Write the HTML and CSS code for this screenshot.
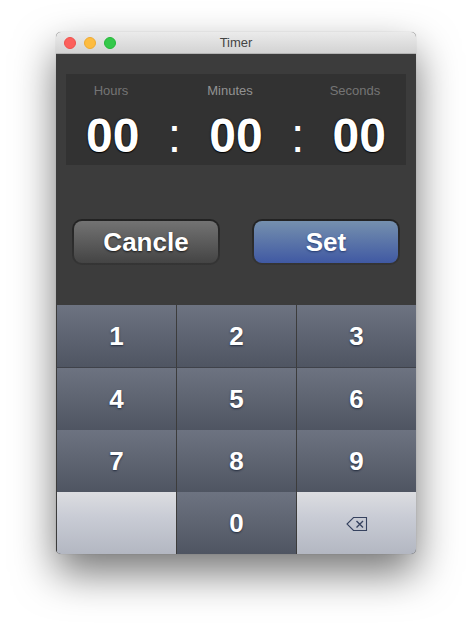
FILE: index.html
```html
<!DOCTYPE html>
<html lang="en">
<head>
<meta charset="utf-8">
<meta name="viewport" content="width=device-width, initial-scale=1">
<title>Timer</title>
<link rel="stylesheet" href="styles.css">
</head>
<body>
<main class="window">
  <header class="titlebar">
    <div class="lights">
      <button class="light close" type="button" aria-label="Close"></button>
      <button class="light minimize" type="button" aria-label="Minimize"></button>
      <button class="light expand" type="button" aria-label="Zoom"></button>
    </div>
    <h1 class="title">Timer</h1>
  </header>
  <section class="display">
    <div class="labels"><span>Hours</span><span class="bright">Minutes</span><span>Seconds</span></div>
    <div class="digits">
      <span>00</span><span class="colon">:</span><span>00</span><span class="colon">:</span><span>00</span>
    </div>
  </section>
  <div class="actions">
    <button class="action" type="button">Cancle</button>
    <button class="action set" type="button">Set</button>
  </div>
  <div class="keypad">
    <button class="key" type="button">1</button>
    <button class="key" type="button">2</button>
    <button class="key" type="button">3</button>
    <button class="key" type="button">4</button>
    <button class="key" type="button">5</button>
    <button class="key" type="button">6</button>
    <button class="key" type="button">7</button>
    <button class="key" type="button">8</button>
    <button class="key" type="button">9</button>
    <button class="key light-key" type="button" aria-label="Blank"></button>
    <button class="key" type="button">0</button>
    <button class="key light-key" type="button" aria-label="Delete">
      <svg class="delete" viewBox="0 0 22 16" width="22" height="16" fill="none" stroke="#36425f">
        <path d="M7.500 1.500H20.500V14.500H7.500L1 8Z" stroke-width="1.100"/>
        <path d="M10.500 5L17 11.500M17 5L10.500 11.500" stroke-width="1.400"/>
      </svg>
    </button>
  </div>
</main>
</body>
</html>
```
FILE: styles.css
```css
* { box-sizing: border-box; }

body {
  margin: 0;
  padding: 32px 56px 80px;
  background: #fff;
  font-family: "Liberation Sans", Arial, sans-serif;
}

button {
  margin: 0;
  padding: 0;
  border: 0;
  font-family: inherit;
}

.window {
  overflow: hidden;
  border-radius: 5px;
  background: #3c3c3c;
  box-shadow: 0 0 1px rgba(0, 0, 0, 0.3), 0 19px 42px rgba(0, 0, 0, 0.54);
}

.titlebar {
  display: grid;
  grid-template-columns: 1fr auto 1fr;
  align-items: center;
  height: 22px;
  padding: 0 8px;
  background: linear-gradient(#ebebeb, #d3d3d3);
  border-bottom: 1px solid #b4b4b4;
}

.lights {
  display: flex;
  gap: 8px;
}

.light {
  width: 12px;
  height: 12px;
  border-radius: 50%;
}

.close { background: #fc605c; border: 1px solid #ee514c; }
.minimize { background: #fdbc40; border: 1px solid #eeaa32; }
.expand { background: #34c84a; border: 1px solid #24b838; }

.title {
  margin: 0;
  color: #444;
  font-size: 13px;
  font-weight: 400;
  line-height: 20px;
}

.display {
  margin: 20px 10px 0;
  padding: 8px 0 0;
  background: #323232;
}

.labels {
  display: grid;
  grid-template-columns: 90px 1fr 102px;
  color: #757575;
  font-size: 13px;
  line-height: 17px;
  text-align: center;
}

.bright { color: #929292; }

.digits {
  display: grid;
  grid-template-columns: repeat(5, 1fr);
  padding: 8px 16px 0;
  color: #fff;
  font-size: 48px;
  font-weight: 700;
  line-height: 58px;
  text-align: center;
  text-shadow: 0 0 2px #000, 0 1px 1px #000;
}

.colon {
  font-weight: 400;
  text-shadow: none;
}

.actions {
  display: grid;
  grid-template-columns: 1fr 1fr;
  gap: 32px;
  padding: 54px 16px 40px;
}

.action {
  height: 46px;
  border: 2px solid transparent;
  border-radius: 10px;
  background:
    linear-gradient(#737373, #444) padding-box,
    linear-gradient(#222, #353535) border-box;
  color: #fff;
  font-size: 26px;
  font-weight: 700;
  line-height: 42px;
  text-shadow: 0 1px 2px rgba(0, 0, 0, 0.7);
}

.set {
  background:
    linear-gradient(#7590ae, #4059a3) padding-box,
    linear-gradient(#222, #353535) border-box;
  text-shadow: 0 1px 2px rgba(20, 40, 90, 0.7);
}

.keypad {
  display: grid;
  grid-template-columns: repeat(3, 1fr);
  grid-template-rows: 63px;
  grid-auto-rows: 62px;
}

.key {
  border-left: 1px solid #3c3c3c;
  background: linear-gradient(#6d7381, #4f5562);
  color: #fff;
  font-size: 26px;
  font-weight: 700;
  text-shadow: 0 1px 2px rgba(20, 30, 50, 0.8);
}

.key:nth-child(-n+3) { border-bottom: 1px solid #3f424a; }

.light-key { background: linear-gradient(#dcdde1, #c9ccd5 40%, #b3b7c2); }

.delete {
  display: block;
  margin: 2px auto 0;
}
```
